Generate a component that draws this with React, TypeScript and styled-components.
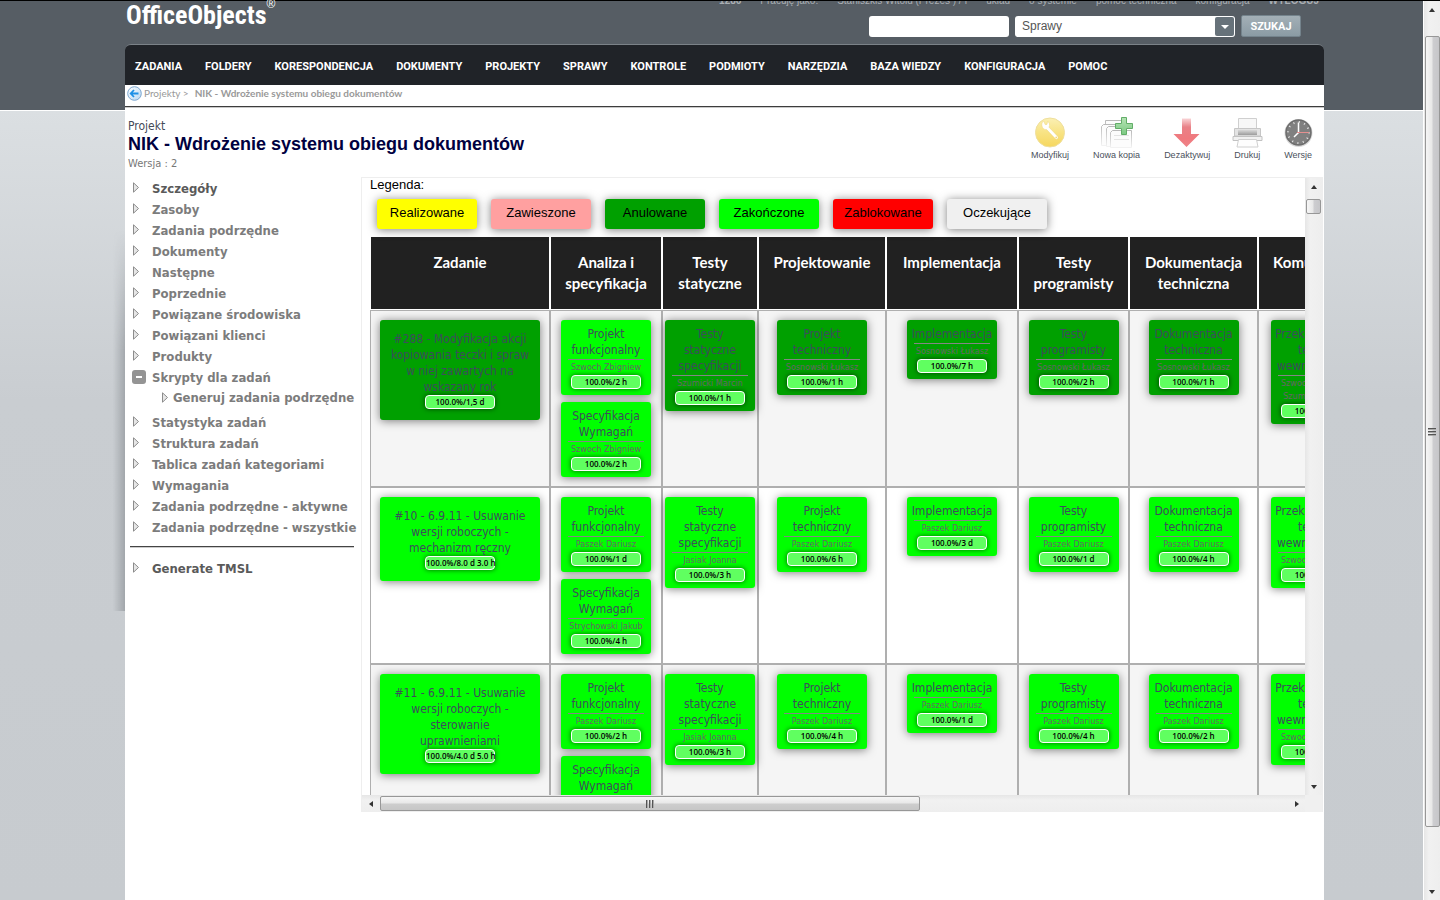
import React from 'react';
import styled, { createGlobalStyle, css } from 'styled-components';

const tahoma = `'DejaVu Sans Condensed', 'DejaVu Sans', sans-serif`;
const arial = `'Liberation Sans', Arial, sans-serif`;
const compact = `Roboto, 'Liberation Sans', sans-serif`;
const calibri = `Lato, 'Open Sans', sans-serif`;
const humanist = `'Open Sans', 'Noto Sans', sans-serif`;

const GlobalStyle = createGlobalStyle`
  * { box-sizing: border-box; }
  html, body { margin: 0; padding: 0; }
  body { font-family: ${arial}; background: #c7cbcf; }
  button, input, select { font-family: inherit; margin: 0; }
  a { color: inherit; text-decoration: none; }
  ul { list-style: none; margin: 0; padding: 0; }
`;

const Page = styled.div`
  display: grid;
  grid-template-columns: minmax(0, 1fr) 16px;
  min-height: 100vh;
  border-top: 1px solid #000;
`;

const Desk = styled.div`
  position: relative;
  display: flex;
  padding: 0 99px 0 125px;
  border-right: 1px solid #fff;
  background:
    linear-gradient(#565d64, #565d64) 0 0 / 100% 109px no-repeat,
    linear-gradient(#fff, #fff) 0 109px / 100% 1px no-repeat,
    linear-gradient(#dbdfe2 110px, #c9cdd1 400px, #c7cbcf);

  &::before {
    content: '';
    position: absolute;
    left: 113px;
    top: 229px;
    width: 12px;
    height: 381px;
    background: linear-gradient(to right, rgba(90, 96, 102, 0), rgba(90, 96, 102, 0.35));
    mask-image: linear-gradient(transparent, #000 120px);
  }
`;

const Shell = styled.div`
  flex: 1;
  min-width: 0;
  display: flex;
  flex-direction: column;
`;

const Header = styled.header`
  display: flex;
  justify-content: space-between;
  height: 43px;
`;

const Logo = styled.a`
  display: flex;
  align-items: flex-start;
  height: 28px;
  padding-left: 1px;
  color: #fff;
  font: bold 26px/28px 'Roboto Condensed', ${compact};

  sup {
    font: 12px/10px ${arial};
    margin-top: -2px;
  }
`;

const HeaderTools = styled.div`
  display: flex;
  flex-direction: column;
  align-items: flex-end;
`;

const MetaLinks = styled.div`
  display: flex;
  align-items: flex-end;
  gap: 19px;
  height: 6px;
  padding-right: 5px;
  overflow: hidden;
  color: #a9aeb3;
  font-size: 10px;
  line-height: 13px;
  white-space: nowrap;
`;

const SearchForm = styled.form`
  display: flex;
  align-items: center;
  gap: 6px;
  margin-top: 8px;
  padding-right: 23px;
`;

const SearchInput = styled.input`
  width: 140px;
  height: 21px;
  border: 0;
  border-radius: 3px;
  background: #fff;
`;

const SelectWrap = styled.div`
  position: relative;
  width: 220px;
  height: 21px;

  &::before {
    content: '';
    position: absolute;
    top: 1px;
    right: 1px;
    width: 19px;
    height: 19px;
    border-radius: 2px;
    background: #67727a;
    pointer-events: none;
  }

  &::after {
    content: '';
    position: absolute;
    top: 9px;
    right: 6px;
    border: 4px solid transparent;
    border-top-color: #fff;
    border-bottom: 0;
    pointer-events: none;
  }
`;

const SearchSelect = styled.select`
  appearance: none;
  width: 100%;
  height: 21px;
  padding: 0 24px 0 7px;
  border: 0;
  border-radius: 3px;
  background: #fff;
  color: #555;
  font-size: 12px;
`;

const SearchButton = styled.button`
  width: 60px;
  height: 22px;
  padding: 0;
  border: 1px solid #74838c;
  border-radius: 2px;
  background: linear-gradient(#a3afb6, #8b9ba4);
  color: #fff;
  font-family: ${compact};
  font-size: 11px;
  font-weight: bold;
`;

const NavBar = styled.nav`
  display: flex;
  align-items: center;
  gap: 23px;
  height: 41px;
  padding: 4px 10px 0;
  border-top: 1px solid #7b8288;
  border-radius: 6px 6px 0 0;
  background: #202328;
  color: #fff;
  font: bold 11px/14px ${compact};
  white-space: nowrap;
`;

const Body = styled.main`
  flex: 1;
  background: #fff;
`;

const Breadcrumb = styled.div`
  display: flex;
  align-items: flex-start;
  gap: 2px;
  height: 23px;
  padding: 1px 2px 0;
  border-bottom: 1px solid #c9c9c9;
  box-shadow: inset 0 -1px #3c3c3c;
  color: #999;
  font: 10px/14px ${calibri};

  b { margin-left: 4px; }
`;

const TitleBar = styled.div`
  display: flex;
  justify-content: space-between;
  align-items: flex-start;
  height: 69px;
  padding: 10px 12px 0 3px;
`;

const Kicker = styled.div`
  color: #444a58;
  font: 12px/16px ${tahoma};
`;

const Title = styled.h1`
  margin: 0;
  color: #000040;
  font: bold 18px/20px ${arial};
`;

const Version = styled.div`
  color: #777;
  font: 11px/20px ${tahoma};
`;

const Actions = styled.div`
  display: flex;
  gap: 24px;
`;

const Action = styled.button`
  display: flex;
  flex-direction: column;
  align-items: center;
  padding: 0;
  border: 0;
  background: none;
  color: #4b515c;
  font: 9px/14px ${arial};
  white-space: nowrap;

  svg { display: block; margin: -2px -3px 0; }
`;

const Columns = styled.div`
  display: grid;
  grid-template-columns: 236px minmax(0, 1fr);
`;

const Sidebar = styled.nav`
  padding: 1px 7px 0 5px;
  color: #7c7c7c;
  font: bold 13px/21px ${tahoma};
  white-space: nowrap;
`;

const MenuItem = styled.li<{ $strong?: boolean }>`
  color: ${p => (p.$strong ? '#5a5a5a' : 'inherit')};
`;

const MenuLink = styled.a`
  display: flex;
  height: 21px;
  padding-left: 2px;

  svg { flex: none; margin: 4px 10px 0 0; }
`;

const NestedLink = styled(MenuLink)`
  height: 24px;
  padding-left: 31px;
  line-height: 19px;

  svg { margin-right: 2px; }
`;

const Minus = styled.span`
  display: flex;
  align-items: center;
  justify-content: center;
  width: 14px;
  height: 14px;
  margin: 3px 6px 0 0;
  border-radius: 3px;
  background: #949494;

  &::before { content: ''; width: 6px; height: 2px; background: #fff; }
`;

const MenuRule = styled.hr`
  height: 2px;
  margin: 8px 0 10px;
  border: 0;
  border-top: 1px solid #444;
  border-bottom: 1px solid #ccc;
`;

const Panel = styled.section`
  display: grid;
  grid-template-columns: minmax(0, 1fr) 17px;
  grid-template-rows: calc(100vh - 283px) 17px;
  margin-right: 1px;
  border: 1px solid #eee;
  border-bottom: 0;
  background: #f0f0f0;
`;

const Viewport = styled.div`
  padding-left: 8px;
  overflow: auto;
  scrollbar-width: none;
  background: #fff;
`;

const LegendTitle = styled.div`
  font-size: 13px;
  line-height: 14px;
`;

const shadow = css`box-shadow: 0 1px 10px rgba(0, 0, 0, 0.5);`;

const Legend = styled.ul`
  display: flex;
  gap: 14px;
  margin: 7px 0 7px 7px;
`;

const Chip = styled.li<{ $color: string }>`
  width: 100px;
  height: 30px;
  border-radius: 3px;
  background: ${p => p.$color};
  ${shadow}
  font-size: 13px;
  line-height: 28px;
  text-align: center;
`;

const Board = styled.table`
  width: 1004px;
  table-layout: fixed;
  border-collapse: separate;
  border-spacing: 0;
`;

const HeadCell = styled.th<{ $width: number }>`
  width: ${p => p.$width}px;
  height: 74px;
  padding: 15px 0 0;
  border: 1px solid #fff;
  background: #212121;
  color: #fff;
  font: bold 15px/21px ${calibri};
  vertical-align: top;
  white-space: pre-line;
`;

const Row = styled.tr`
  background: #fff;
  &:nth-child(odd) { background: #f5f5f5; }
`;

const Cell = styled.td`
  padding: 9px 0;
  border: 1px solid #afafaf;
  vertical-align: top;
`;

const Stack = styled.div`
  display: flex;
  flex-direction: column;
  align-items: center;
  gap: 7px;
`;

const Card = styled.article<{ $color: string }>`
  width: 90px;
  padding: 6px 0;
  border-radius: 3px;
  background: ${p => p.$color};
  ${shadow}
  color: #3d4d5c;
  font: 12px/16px ${tahoma};
  text-align: center;
  white-space: pre-line;
`;

const TaskCard = styled(Card)`
  width: 160px;
  padding: 11px 0;
`;

const Owner = styled.div`
  margin: 1px 7px;
  padding-top: 1px;
  border-top: 1px solid #858585;
  color: #666;
  font-size: 9px;
  line-height: 13px;
`;

const Pill = styled.div`
  width: 70px;
  height: 14px;
  margin: 0 auto;
  border: 1px solid #fff;
  border-radius: 4px;
  background: #60ff60;
  box-shadow: 0 0 5px rgba(0, 0, 0, 0.6);
  color: #000;
  font: 600 8px/11px ${humanist};
  white-space: nowrap;
`;

const Track = styled.div<{ $horizontal?: boolean }>`
  display: flex;
  flex-direction: ${p => (p.$horizontal ? 'row' : 'column')};
  align-items: center;
  background: linear-gradient(${p => (p.$horizontal ? 'to bottom' : 'to right')}, #e6e6e6, #f1f1f1 30%, #eee);
`;

const Arrow = styled.div<{ $dir: 'up' | 'down' | 'left' | 'right' }>`
  flex: none;
  display: flex;
  align-items: center;
  justify-content: center;
  width: 17px;
  height: 17px;

  &::before {
    content: '';
    border: 3px solid transparent;
    ${p => p.$dir === 'up' && css`border-bottom: 4px solid #333; border-top: 0;`}
    ${p => p.$dir === 'down' && css`border-top: 4px solid #333; border-bottom: 0;`}
    ${p => p.$dir === 'left' && css`border-right: 4px solid #333; border-left: 0;`}
    ${p => p.$dir === 'right' && css`border-left: 4px solid #333; border-right: 0;`}
  }
`;

const Thumb = styled.div<{ $horizontal?: boolean; $size: string; $offset: string; $grip?: boolean }>`
  flex: none;
  display: flex;
  align-items: center;
  justify-content: center;
  border: 1px solid #979797;
  border-radius: 2px;
  ${p =>
    p.$horizontal
      ? css`
          width: ${p.$size};
          height: 15px;
          margin-left: ${p.$offset};
          background: linear-gradient(#f6f6f6, #e8e8e8 45%, #cdcdcd 55%, #c6c6c6);
        `
      : css`
          width: 15px;
          height: ${p.$size};
          margin-top: ${p.$offset};
          background: linear-gradient(to right, #f6f6f6, #e8e8e8 45%, #cdcdd0 55%, #c6c6c9);
        `}

  &::before {
    content: '';
    display: ${p => (p.$grip ? 'block' : 'none')};
    width: 8px;
    height: 8px;
    background: repeating-linear-gradient(
      ${p => (p.$horizontal ? 'to right' : 'to bottom')},
      #555 0 1px, #aaa 1px 2px, transparent 2px 3px
    );
  }
`;

const Spacer = styled.div`flex: 1;`;

const BackIcon = () => (
  <svg width="15" height="15" viewBox="0 0 15 15" aria-hidden="true">
    <defs>
      <linearGradient id="back" x1="0" y1="0" x2="1" y2="1">
        <stop offset="0" stopColor="#fff" />
        <stop offset="1" stopColor="#b5d6f2" />
      </linearGradient>
    </defs>
    <circle cx="7.5" cy="7.5" r="6.8" fill="url(#back)" stroke="#7ba6cf" />
    <path d="M11.5 7.5H4M7 4L3.7 7.5L7 11" fill="none" stroke="#1e90e6" strokeWidth="1.8" />
  </svg>
);

const TriangleIcon = () => (
  <svg width="10" height="11" viewBox="0 0 10 11" aria-hidden="true">
    <path d="M1.5 .8V10.2L6.5 5.5Z" fill="#e6e6e6" stroke="#8c8c8c" />
  </svg>
);

const WrenchIcon = () => (
  <svg width="32" height="32" viewBox="0 0 32 32" aria-hidden="true">
    <defs>
      <linearGradient id="gold" x1="0" y1="0" x2="0" y2="1">
        <stop offset="0" stopColor="#fbf0b4" />
        <stop offset=".5" stopColor="#f8e384" />
        <stop offset="1" stopColor="#f6d75e" />
      </linearGradient>
    </defs>
    <circle cx="16" cy="16.5" r="14.5" fill="url(#gold)" stroke="#efdf9c" />
    <path d="M7.8 9.2C7.6 7.5 8.4 6 9.6 5L11.2 8.6L13 8.4L13.6 5.4C15.6 6.6 16.2 9 15 11.2L23.6 20.2C25 22 23.2 24 21.4 22.8L12.6 13.6C10.4 14 8.2 12.4 7.8 9.2Z" fill="#fff" stroke="#ecd47c" strokeWidth=".5" />
    <circle cx="22.2" cy="21.4" r=".8" fill="#f3d76c" />
  </svg>
);

const CopyIcon = () => (
  <svg width="32" height="32" viewBox="0 0 32 32" aria-hidden="true">
    <defs>
      <linearGradient id="sheet" x1="0" y1="0" x2="0" y2="1">
        <stop offset="0" stopColor="#b9b9b9" />
        <stop offset="1" stopColor="#f2f2f2" />
      </linearGradient>
      <linearGradient id="plus" x1="0" y1="0" x2="0" y2="1">
        <stop offset="0" stopColor="#b5e3b4" />
        <stop offset="1" stopColor="#7cc983" />
      </linearGradient>
    </defs>
    <g fill="#fcfcfc" stroke="url(#sheet)">
      <path d="M4.5 4.5H22.5V26H4.5Z" />
      <path d="M.5 10.5L2.5 8.5H16.5V29.5H.5Z" />
      <path d="M5.5 12.5L7.5 10.5H22.5V30.5H5.5Z" />
      <path d="M9.5 16.5L11.5 14.5H30.5V31.5H9.5Z" />
    </g>
    <path d="M13 19.5H28M13 23.5H28" stroke="#e4e4e4" />
    <path d="M20.5 1.5H25.5V7.5H31.5V12.5H25.5V18.5H20.5V12.5H14.5V7.5H20.5Z" fill="url(#plus)" stroke="#62ad68" />
  </svg>
);

const DownIcon = () => (
  <svg width="32" height="32" viewBox="0 0 32 32" aria-hidden="true">
    <defs>
      <linearGradient id="red" x1="0" y1="0" x2="0" y2="1">
        <stop offset="0" stopColor="#f9d4d6" />
        <stop offset=".3" stopColor="#e98187" />
        <stop offset=".7" stopColor="#f0797e" />
        <stop offset="1" stopColor="#ee8488" />
      </linearGradient>
    </defs>
    <path d="M11 2.5H20V18H28.5L15.5 31L2.5 18H11Z" fill="url(#red)" />
  </svg>
);

const PrinterIcon = () => (
  <svg width="32" height="32" viewBox="0 0 32 32" aria-hidden="true">
    <defs>
      <linearGradient id="slot" x1="0" y1="0" x2="0" y2="1">
        <stop offset="0" stopColor="#d9d9d9" />
        <stop offset="1" stopColor="#9c9c9c" />
      </linearGradient>
    </defs>
    <path d="M7.5 2.5H25.5V13H7.5Z" fill="#f7f7f7" stroke="#cfcfcf" />
    <path d="M3.5 12.5H29.5V20H3.5Z" fill="#e3e3e3" stroke="#c6c6c6" />
    <path d="M7 14H26V19H7Z" fill="url(#slot)" />
    <path d="M2 20.5H31V24.5H2Z" fill="#f1f1f1" stroke="#c2c2c2" />
    <path d="M7.5 23.5H25.5L27 31H6Z" fill="#fdfdfd" stroke="#d0d0d0" />
  </svg>
);

const ClockIcon = () => (
  <svg width="32" height="32" viewBox="0 0 32 32" aria-hidden="true">
    <circle cx="16.5" cy="17" r="14" fill="#dadada" />
    <circle cx="16.5" cy="16.5" r="12.5" fill="#808080" stroke="#6d6d6d" strokeWidth="1.5" />
    <circle cx="16.5" cy="16.5" r="10.5" fill="none" stroke="#e6e6e6" strokeWidth="2" strokeDasharray="1 4.498" />
    <path d="M16.5 16.5V6.5M16.5 16.5L12 21" fill="none" stroke="#fff" strokeWidth="1.5" />
    <path d="M15 16.5H27" stroke="#e58f8f" />
  </svg>
);

const navItems = ['ZADANIA', 'FOLDERY', 'KORESPONDENCJA', 'DOKUMENTY', 'PROJEKTY', 'SPRAWY', 'KONTROLE', 'PODMIOTY', 'NARZĘDZIA', 'BAZA WIEDZY', 'KONFIGURACJA', 'POMOC'];

const menuTop = ['Szczegóły', 'Zasoby', 'Zadania podrzędne', 'Dokumenty', 'Następne', 'Poprzednie', 'Powiązane środowiska', 'Powiązani klienci', 'Produkty'];
const menuBottom = ['Statystyka zadań', 'Struktura zadań', 'Tablica zadań kategoriami', 'Wymagania', 'Zadania podrzędne - aktywne', 'Zadania podrzędne - wszystkie'];

const actions = [
  { label: 'Modyfikuj', Icon: WrenchIcon },
  { label: 'Nowa kopia', Icon: CopyIcon },
  { label: 'Dezaktywuj', Icon: DownIcon },
  { label: 'Drukuj', Icon: PrinterIcon },
  { label: 'Wersje', Icon: ClockIcon },
];

const DONE = '#00ff00';
const CANCELLED = '#00a000';

const legend = [
  ['Realizowane', '#ffff00'],
  ['Zawieszone', '#ffa0a0'],
  ['Anulowane', CANCELLED],
  ['Zakończone', DONE],
  ['Zablokowane', '#ff0000'],
  ['Oczekujące', '#f0f0f0'],
];

const columns: [string, number][] = [
  ['Zadanie', 180],
  ['Analiza i\nspecyfikacja', 112],
  ['Testy\nstatyczne', 96],
  ['Projektowanie', 128],
  ['Implementacja', 132],
  ['Testy\nprogramisty', 111],
  ['Dokumentacja\ntechniczna', 129],
  ['Komunikacja', 116],
];

type Item = { title: string; owner: string; progress: string; color: string };
type Task = { title: string; progress: string; color: string; cells: Item[][] };

const item = (title: string, owner: string, progress: string, color = DONE): Item => ({ title, owner, progress, color });

const FUNC = 'Projekt\nfunkcjonalny';
const SPEC = 'Specyfikacja\nWymagań';
const STATIC = 'Testy\nstatyczne\nspecyfikacji';
const TECH = 'Projekt\ntechniczny';
const IMPL = 'Implementacja';
const DEV = 'Testy\nprogramisty';
const DOCS = 'Dokumentacja\ntechniczna';
const HANDOVER = 'Przekazanie do\ntestów\nwewnętrznych';

const tasks: Task[] = [
  {
    title: '#288 - Modyfikacja akcji\nkopiowania teczki i spraw\nw niej zawartych na\nwskazany rok',
    progress: '100.0%/1,5 d',
    color: CANCELLED,
    cells: [
      [item(FUNC, 'Szwoch Zbigniew', '100.0%/2 h'), item(SPEC, 'Szwoch Zbigniew', '100.0%/2 h')],
      [item(STATIC, 'Szumicki Marcin', '100.0%/1 h', CANCELLED)],
      [item(TECH, 'Sosnowski Łukasz', '100.0%/1 h', CANCELLED)],
      [item(IMPL, 'Sosnowski Łukasz', '100.0%/7 h', CANCELLED)],
      [item(DEV, 'Sosnowski Łukasz', '100.0%/2 h', CANCELLED)],
      [item(DOCS, 'Sosnowski Łukasz', '100.0%/1 h', CANCELLED)],
      [item(HANDOVER, 'Szwoch Zbigniew\nSzumicki Marcin', '100.0%/1 h', CANCELLED)],
    ],
  },
  {
    title: '#10 - 6.9.11 - Usuwanie\nwersji roboczych -\nmechanizm ręczny',
    progress: '100.0%/8.0 d 3.0 h',
    color: DONE,
    cells: [
      [item(FUNC, 'Paszek Dariusz', '100.0%/1 d'), item(SPEC, 'Strychowski Jakub', '100.0%/4 h')],
      [item(STATIC, 'Jasiak Joanna', '100.0%/3 h')],
      [item(TECH, 'Paszek Dariusz', '100.0%/6 h')],
      [item(IMPL, 'Paszek Dariusz', '100.0%/3 d')],
      [item(DEV, 'Paszek Dariusz', '100.0%/1 d')],
      [item(DOCS, 'Paszek Dariusz', '100.0%/4 h')],
      [item(HANDOVER, 'Szwoch Zbigniew', '100.0%/1 h')],
    ],
  },
  {
    title: '#11 - 6.9.11 - Usuwanie\nwersji roboczych -\nsterowanie\nuprawnieniami',
    progress: '100.0%/4.0 d 5.0 h',
    color: DONE,
    cells: [
      [item(FUNC, 'Paszek Dariusz', '100.0%/2 h'), item(SPEC, 'Strychowski Jakub', '100.0%/4 h')],
      [item(STATIC, 'Jasiak Joanna', '100.0%/3 h')],
      [item(TECH, 'Paszek Dariusz', '100.0%/4 h')],
      [item(IMPL, 'Paszek Dariusz', '100.0%/1 d')],
      [item(DEV, 'Paszek Dariusz', '100.0%/4 h')],
      [item(DOCS, 'Paszek Dariusz', '100.0%/2 h')],
      [item(HANDOVER, 'Szwoch Zbigniew', '100.0%/1 h')],
    ],
  },
];

const MenuEntry = ({ label, strong }: { label: string; strong?: boolean }) => (
  <MenuItem $strong={strong}>
    <MenuLink href="#"><TriangleIcon />{label}</MenuLink>
  </MenuItem>
);

export default function App() {
  return (
    <>
      <GlobalStyle />
      <Page>
        <Desk>
          <Shell>
            <Header>
              <Logo href="#">OfficeObjects<sup>®</sup></Logo>
              <HeaderTools>
                <MetaLinks>
                  <b>1286</b>
                  <span>Pracuję jako:</span>
                  <span>Staniszkis Witold (Prezes ) / I</span>
                  <a href="#">układ</a>
                  <a href="#">o systemie</a>
                  <a href="#">pomoc techniczna</a>
                  <a href="#">konfiguracja</a>
                  <a href="#"><b>WYLOGUJ</b></a>
                </MetaLinks>
                <SearchForm onSubmit={e => e.preventDefault()}>
                  <SearchInput type="text" aria-label="Szukana fraza" />
                  <SelectWrap>
                    <SearchSelect aria-label="Zakres"><option>Sprawy</option></SearchSelect>
                  </SelectWrap>
                  <SearchButton type="submit">SZUKAJ</SearchButton>
                </SearchForm>
              </HeaderTools>
            </Header>
            <NavBar>
              {navItems.map(n => <a href="#" key={n}>{n}</a>)}
            </NavBar>
            <Body>
              <Breadcrumb>
                <BackIcon />
                <a href="#">Projekty &gt;</a>
                <b>NIK - Wdrożenie systemu obiegu dokumentów</b>
              </Breadcrumb>
              <TitleBar>
                <div>
                  <Kicker>Projekt</Kicker>
                  <Title>NIK - Wdrożenie systemu obiegu dokumentów</Title>
                  <Version>Wersja : 2</Version>
                </div>
                <Actions>
                  {actions.map(({ label, Icon }) => (
                    <Action type="button" key={label}><Icon />{label}</Action>
                  ))}
                </Actions>
              </TitleBar>
              <Columns>
                <Sidebar>
                  <ul>
                    {menuTop.map((m, i) => <MenuEntry key={m} label={m} strong={i === 0} />)}
                    <MenuItem>
                      <MenuLink href="#"><Minus />Skrypty dla zadań</MenuLink>
                      <ul>
                        <li><NestedLink href="#"><TriangleIcon />Generuj zadania podrzędne</NestedLink></li>
                      </ul>
                    </MenuItem>
                    {menuBottom.map(m => <MenuEntry key={m} label={m} />)}
                  </ul>
                  <MenuRule />
                  <ul><MenuEntry label="Generate TMSL" strong /></ul>
                </Sidebar>
                <Panel>
                  <Viewport>
                    <LegendTitle>Legenda:</LegendTitle>
                    <Legend>
                      {legend.map(([label, color]) => <Chip key={label} $color={color}>{label}</Chip>)}
                    </Legend>
                    <Board>
                      <thead>
                        <tr>{columns.map(([label, width]) => <HeadCell key={label} $width={width}>{label}</HeadCell>)}</tr>
                      </thead>
                      <tbody>
                        {tasks.map(t => (
                          <Row key={t.title}>
                            <Cell>
                              <Stack>
                                <TaskCard $color={t.color}>{t.title}<Pill>{t.progress}</Pill></TaskCard>
                              </Stack>
                            </Cell>
                            {t.cells.map((cell, i) => (
                              <Cell key={i}>
                                <Stack>
                                  {cell.map(c => (
                                    <Card key={c.title} $color={c.color}>
                                      {c.title}
                                      <Owner>{c.owner}</Owner>
                                      <Pill>{c.progress}</Pill>
                                    </Card>
                                  ))}
                                </Stack>
                              </Cell>
                            ))}
                          </Row>
                        ))}
                      </tbody>
                    </Board>
                  </Viewport>
                  <Track>
                    <Arrow $dir="up" />
                    <Thumb $size="15px" $offset="4px" />
                    <Spacer />
                    <Arrow $dir="down" />
                  </Track>
                  <Track $horizontal>
                    <Arrow $dir="left" />
                    <Thumb $horizontal $grip $size="57.3%" $offset="1px" />
                    <Spacer />
                    <Arrow $dir="right" />
                  </Track>
                </Panel>
              </Columns>
            </Body>
          </Shell>
        </Desk>
        <Track>
          <Arrow $dir="up" />
          <Thumb $grip $size="88%" $offset="18px" />
          <Spacer />
          <Arrow $dir="down" />
        </Track>
      </Page>
    </>
  );
}
